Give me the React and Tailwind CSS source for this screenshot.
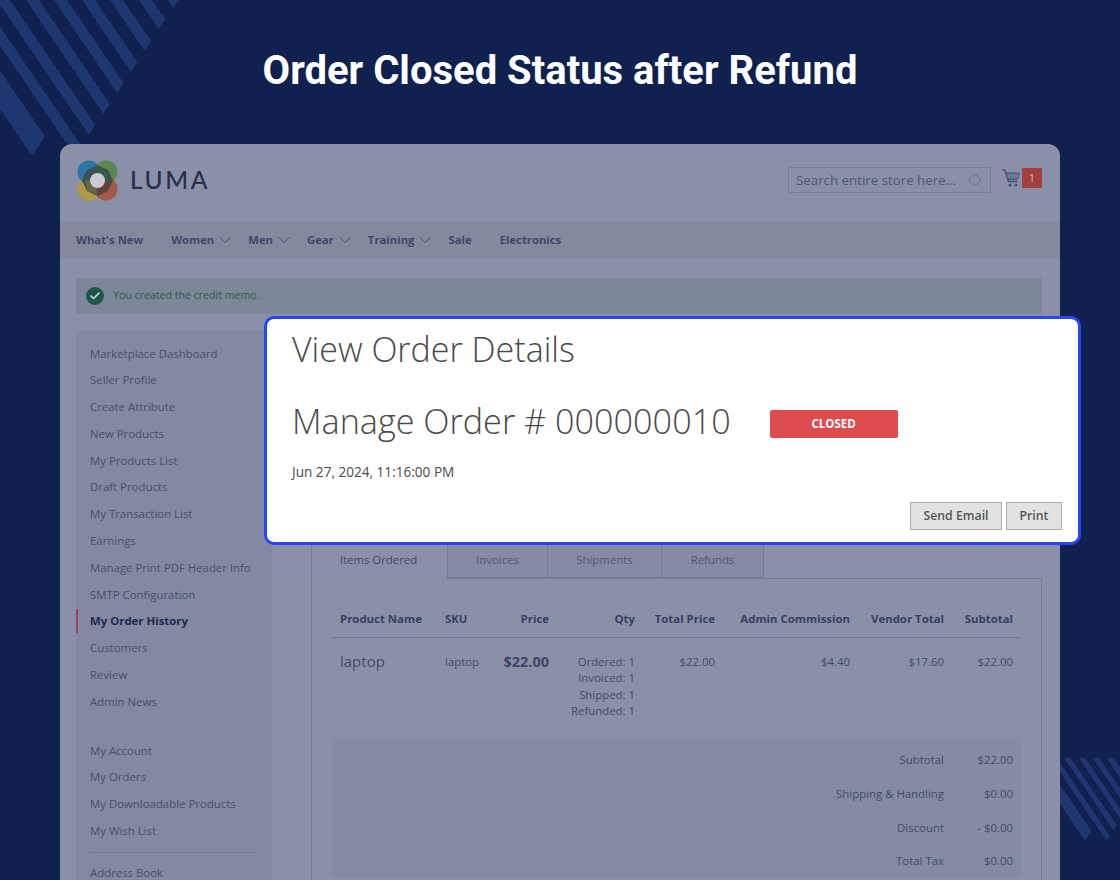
import React from 'react';
import { Search, ChevronDown, Check } from 'lucide-react';

const navItems = [
    { label: "What's New" },
    { label: 'Women', drop: true },
    { label: 'Men', drop: true },
    { label: 'Gear', drop: true },
    { label: 'Training', drop: true },
    { label: 'Sale' },
    { label: 'Electronics' },
];

const sellerLinks = [
    'Marketplace Dashboard', 'Seller Profile', 'Create Attribute', 'New Products', 'My Products List',
    'Draft Products', 'My Transaction List', 'Earnings', 'Manage Print PDF Header Info', 'SMTP Configuration',
    'My Order History', 'Customers', 'Review', 'Admin News',
];
const accountLinks = ['My Account', 'My Orders', 'My Downloadable Products', 'My Wish List'];
const totals = [
    ['Subtotal', '$22.00'],
    ['Shipping & Handling', '$0.00'],
    ['Discount', '- $0.00'],
    ['Total Tax', '$0.00'],
];

// left edge at y=0, width, tip y of each band
const bands = [
    [-74, 26, 156], [-31, 13, 156], [-3, 13, 135], [26, 13, 114], [54, 13, 93],
    [82, 13, 72], [110, 13, 51], [139, 13, 29], [168, 13, 8],
];

function Stripes() {
    return bands.map(([l, w, tip]) => {
        const k = 0.68;
        const rise = w * 0.76;
        const pts = [
            [l - 60 * k, -60], [l + w - 60 * k, -60],
            [l + tip * k + w * 0.49, tip - rise], [l + tip * k, tip],
        ];
        return <polygon key={l} points={pts.map(p => p.join(',')).join(' ')} fill="#1f3670" />;
    });
}

function Logo() {
    return (
        <svg width="41" height="41" viewBox="0 0 41 41" className="shrink-0">
            <circle cx="12" cy="12" r="11.5" fill="#2b74a4" />
            <circle cx="29" cy="12" r="11.5" fill="#5b864e" />
            <circle cx="12" cy="29" r="11.5" fill="#ad9c42" />
            <circle cx="29" cy="29" r="11.5" fill="#a45a48" />
            <path d="M20.5 5 L31 10 L36 20.5 L31 31 L20.5 36 L10 31 L5 20.5 L10 10 Z" fill="#3d4f58" />
            <path d="M20.5 6 L30 11 L33 20.5 L20.5 20.5 Z" fill="#345a48" />
            <path d="M8 20.5 L10 31 L20.5 35 L20.5 20.5 Z" fill="#66664a" />
            <path d="M33 20.5 L31 30 L20.5 35 L20.5 20.5 Z" fill="#6a3c3e" />
            <circle cx="20.5" cy="20.5" r="7.5" fill="#c9ccd8" />
        </svg>
    );
}

function Cart() {
    return (
        <svg width="18" height="20" viewBox="0 0 18 20" fill="none" stroke="#3f4a70" strokeWidth="1">
            <path d="M0.5 1.5 L3 2.5 L6.5 13.5 H15.5" strokeWidth="1.4" />
            <path d="M4 5 H17.5 L15.5 11.5 H6" fill="#5a6488" />
            <path d="M7 5 L8 11.5 M10 5 L10.5 11.5 M13 5 L12.8 11.5 M15.5 5 L15 11.5 M4.8 8 H16.6" stroke="#8a90a8" strokeWidth="0.7" />
            <circle cx="8" cy="17" r="1.5" fill="#3f4a70" stroke="none" />
            <circle cx="14" cy="17" r="1.5" fill="#3f4a70" stroke="none" />
        </svg>
    );
}

export default function App() {
    return (
        <div className="relative h-[880px] overflow-hidden bg-[#10204f] font-['Open_Sans',sans-serif]">
            {/* corner decorations */}
            <svg width="200" height="170" viewBox="0 0 200 170" className="absolute left-0 top-0">
                <Stripes />
            </svg>
            <svg width="60" height="100" viewBox="0 0 60 100" className="absolute left-[1060px] top-[758px]">
                <g transform="translate(9 4.7) scale(0.5)">
                    <Stripes />
                </g>
            </svg>

            <h1 className="relative pt-[45px] pb-[47px] text-center font-['Roboto',sans-serif] text-[40px] font-bold leading-[52px] text-white">
                Order Closed Status after Refund
            </h1>

            {/* dimmed store page */}
            <div className="relative mx-[60px] h-[736px] overflow-hidden rounded-t-[12px] bg-[#8a90a8]">
                <header className="flex h-[77px] items-start pl-[17px] pr-[18px]">
                    <div className="mt-[16px] flex items-center">
                        <Logo />
                        <span className="ml-[12px] font-['Lato',sans-serif] text-[24.5px] font-medium leading-none tracking-[2.6px] text-[#262e4c]">LUMA</span>
                    </div>
                    <div className="ml-auto mt-[23px] flex h-[26px] w-[203px] items-center justify-between border border-[#787e99] pl-[7px] pr-[7px]">
                        <span className="mt-px text-[13.3px] text-[#4d5576]">Search entire store here...</span>
                        <Search size={15} strokeWidth={1.5} className="text-[#6d7391]" />
                    </div>
                    <div className="ml-[11px] mt-[24px] flex items-start">
                        <Cart />
                        <span className="ml-[2px] flex h-[20px] w-[20px] items-center justify-center bg-[#a33f3f] text-[11px] text-[#c9b6bd]">1</span>
                    </div>
                </header>

                <nav className="flex h-[38px] items-center gap-[28px] bg-[#84899f] pl-[16px]">
                    {navItems.map(item => (
                        <div key={item.label} className={`flex items-center text-[11.3px] font-bold text-[#3f4768] ${item.drop ? '-mr-[15px]' : ''}`}>
                            {item.label}
                            {item.drop && <ChevronDown size={20} strokeWidth={1.1} className="ml-[1px] text-[#3f4768]" />}
                        </div>
                    ))}
                </nav>

                <div className="ml-[16px] mr-[18px] mt-[19px] flex h-[36px] items-center bg-[#7c889a] pl-[10px]">
                    <span className="flex h-[18px] w-[18px] items-center justify-center rounded-full bg-[#1e5749]">
                        <Check size={12} strokeWidth={3.5} className="text-[#c9d3d6]" />
                    </span>
                    <span className="ml-[9px] text-[10.6px] text-[#2f5a4e]">You created the credit memo.</span>
                </div>

                <div className="mx-[16px] mt-[17px] flex items-start">
                    <aside className="h-[600px] w-[196px] shrink-0 bg-[#8389a1] pl-[14px] pr-[14px] pt-[9.5px] text-[11.4px] leading-[26.8px] text-[#484f6e]">
                        {sellerLinks.map(link => link === 'My Order History' ? (
                            <div key={link} className="relative font-bold text-[#1f2a4d]">
                                <span className="absolute -left-[14px] top-[1px] h-[24px] w-[2px] bg-[#a0444f]" />
                                {link}
                            </div>
                        ) : <div key={link}>{link}</div>)}
                        <div className="mt-[22px]">
                            {accountLinks.map(link => <div key={link}>{link}</div>)}
                        </div>
                        <div className="mt-[7px] mb-[7px] h-px bg-[#757b96]" />
                        <div>Address Book</div>
                    </aside>

                    <main className="ml-[39px] w-[731px] pt-[209px]">
                        <div className="flex h-[38px] text-[11.4px] text-[#4f5777]">
                            <div className="flex w-[136px] items-start justify-center border-l border-[#757b96] bg-[#8a90a8] pr-[2px] pt-[11px] font-normal text-[#3f4768]">Items Ordered</div>
                            <div className="flex w-[101px] items-start justify-center border-x border-b border-[#757b96] bg-[#858ba3] pt-[11px]">Invoices</div>
                            <div className="flex w-[114px] items-start justify-center border-r border-b border-[#757b96] bg-[#858ba3] pt-[11px]">Shipments</div>
                            <div className="flex w-[102px] items-start justify-center border-r border-b border-[#757b96] bg-[#858ba3] pt-[11px]">Refunds</div>
                        </div>

                        <div className="h-[400px] border-x border-[#757b96] px-[20px] pt-[33px]">
                            <div className="relative">
                                <span className="absolute -top-[33px] left-[114px] right-[-20px] h-px bg-[#757b96]" />
                            </div>
                            <div className="grid grid-cols-[105px_45px_59px_86px_80px_135px_94px_69px] border-b border-[#757b96] pb-[10px] pl-[8px] text-[11.4px] font-bold leading-[16px] text-[#363f60]">
                                <div>Product Name</div>
                                <div>SKU</div>
                                <div className="text-right">Price</div>
                                <div className="text-right">Qty</div>
                                <div className="text-right">Total Price</div>
                                <div className="text-right">Admin Commission</div>
                                <div className="text-right">Vendor Total</div>
                                <div className="text-right">Subtotal</div>
                            </div>
                            <div className="grid grid-cols-[105px_45px_59px_86px_80px_135px_94px_69px] items-start pl-[8px] pt-[16px] text-[11.4px] leading-[16.3px] text-[#434b6b]">
                                <div className="-translate-y-px text-[15px] leading-[16.3px]">laptop</div>
                                <div>laptop</div>
                                <div className="text-right text-[14.5px] font-bold text-[#3d4566]">$22.00</div>
                                <div className="text-right">
                                    <div>Ordered: 1</div>
                                    <div>Invoiced: 1</div>
                                    <div>Shipped: 1</div>
                                    <div>Refunded: 1</div>
                                </div>
                                <div className="text-right">$22.00</div>
                                <div className="text-right">$4.40</div>
                                <div className="text-right">$17.60</div>
                                <div className="text-right">$22.00</div>
                            </div>
                            <div className="mt-[18px] bg-[#858ba3] pt-[5.5px] pr-[8px]">
                                {totals.map(([label, value]) => (
                                    <div key={label} className="flex h-[33.8px] items-center justify-end text-[11.4px] text-[#434b6b]">
                                        <span>{label}</span>
                                        <span className="w-[69px] text-right">{value}</span>
                                    </div>
                                ))}
                            </div>
                        </div>
                    </main>
                </div>
            </div>

            {/* highlighted order header */}
            <div className="absolute left-[264px] top-[316px] h-[229px] w-[817px] rounded-[10px] border-[3px] border-[#2447f3] bg-white pl-[25px] pr-[16px] pt-[8px] text-[#4a4a4a]">
                <h2 className="text-[34px] font-light leading-[44px]">View Order Details</h2>
                <div className="mt-[27px] flex items-center">
                    <h3 className="text-[34.2px] font-light leading-[46px]">Manage Order # 000000010</h3>
                    <span className="ml-[39px] flex h-[28px] w-[128px] translate-y-[3px] items-center justify-center rounded-[2px] bg-[#de4c4f] text-[11.5px] font-bold text-white">CLOSED</span>
                </div>
                <p className="mt-[19px] text-[13.6px] leading-[18px]">Jun 27, 2024, 11:16:00 PM</p>
                <div className="mt-[21px] flex justify-end gap-[4px]">
                    <button className="h-[28px] w-[92px] border border-[#adadad] bg-[#e2e2e2] text-[12.3px] font-semibold text-[#555]">Send Email</button>
                    <button className="h-[28px] w-[56px] border border-[#adadad] bg-[#e2e2e2] text-[12.3px] font-semibold text-[#555]">Print</button>
                </div>
            </div>
        </div>
    );
}
